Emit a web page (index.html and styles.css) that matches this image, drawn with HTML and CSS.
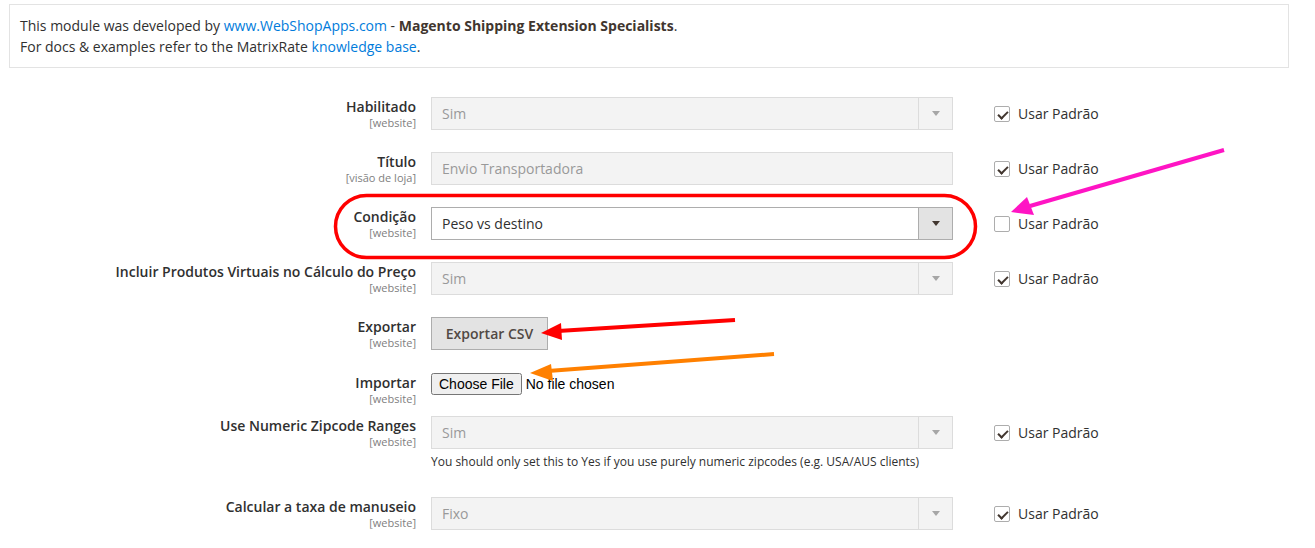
FILE: index.html
```html
<!DOCTYPE html>
<html lang="pt">
<head>
<meta charset="utf-8">
<title>MatrixRate</title>
<link rel="stylesheet" href="styles.css">
</head>
<body>
<div class="page">
  <div class="notice">
    <p>This module was developed by <a href="#">www.WebShopApps.com</a> - <strong>Magento Shipping Extension Specialists</strong>.</p>
    <p>For docs &amp; examples refer to the MatrixRate <a href="#">knowledge base</a>.</p>
  </div>

  <div class="form">
    <div class="row">
      <div class="label"><span class="name">Habilitado</span><span class="scope">[website]</span></div>
      <div class="control"><div class="select disabled"><span class="value">Sim</span><span class="arrow"></span></div></div>
      <label class="default"><span class="check checked"></span>Usar Padrão</label>
    </div>
    <div class="row">
      <div class="label"><span class="name">Título</span><span class="scope">[visão de loja]</span></div>
      <div class="control"><div class="input disabled">Envio Transportadora</div></div>
      <label class="default"><span class="check checked"></span>Usar Padrão</label>
    </div>
    <div class="row">
      <div class="label"><span class="name">Condição</span><span class="scope">[website]</span></div>
      <div class="control"><div class="select"><span class="value">Peso vs destino</span><span class="arrow"></span></div></div>
      <label class="default"><span class="check"></span>Usar Padrão</label>
    </div>
    <div class="row">
      <div class="label"><span class="name">Incluir Produtos Virtuais no Cálculo do Preço</span><span class="scope">[website]</span></div>
      <div class="control"><div class="select disabled"><span class="value">Sim</span><span class="arrow"></span></div></div>
      <label class="default"><span class="check checked"></span>Usar Padrão</label>
    </div>
    <div class="row">
      <div class="label"><span class="name">Exportar</span><span class="scope">[website]</span></div>
      <div class="control"><button class="btn" type="button">Exportar CSV</button></div>
    </div>
    <div class="row row-import">
      <div class="label"><span class="name">Importar</span><span class="scope">[website]</span></div>
      <div class="control"><input class="file" type="file"></div>
    </div>
    <div class="row row-note">
      <div class="label"><span class="name">Use Numeric Zipcode Ranges</span><span class="scope">[website]</span></div>
      <div class="control">
        <div class="select disabled"><span class="value">Sim</span><span class="arrow"></span></div>
        <p class="note">You should only set this to Yes if you use purely numeric zipcodes (e.g. USA/AUS clients)</p>
      </div>
      <label class="default"><span class="check checked"></span>Usar Padrão</label>
    </div>
    <div class="row">
      <div class="label"><span class="name">Calcular a taxa de manuseio</span><span class="scope">[website]</span></div>
      <div class="control"><div class="select disabled"><span class="value">Fixo</span><span class="arrow"></span></div></div>
      <label class="default"><span class="check checked"></span>Usar Padrão</label>
    </div>
  </div>

  <svg class="annot" width="1315" height="548" viewBox="0 0 1315 548" aria-hidden="true">
    <rect x="335.5" y="195.5" width="640" height="62" rx="31" ry="31" fill="none" stroke="#ff0000" stroke-width="3.5"/>
    <line x1="1224" y1="150" x2="1030" y2="206" stroke="#ff14c4" stroke-width="4"/>
    <polygon points="1011,212 1027,197 1034,215" fill="#ff14c4"/>
    <line x1="735" y1="320" x2="558" y2="331" stroke="#ff0000" stroke-width="4"/>
    <polygon points="541,333 561,323 562,340" fill="#ff0000"/>
    <line x1="774" y1="354" x2="548" y2="371" stroke="#ff8000" stroke-width="4"/>
    <polygon points="530,373 551,364 553,381" fill="#ff8000"/>
  </svg>
</div>
</body>
</html>
```
FILE: styles.css
```css
* { box-sizing: border-box; }
html, body { margin: 0; padding: 0; background: #fff; }
body {
  font-family: "Open Sans", "Liberation Sans", sans-serif;
  font-size: 14px;
  color: #303030;
}
.page {
  position: relative;
  width: 1315px;
  height: 548px;
  overflow: hidden;
}
.notice {
  margin: 4px 0 0 9px;
  width: 1280px;
  border: 1px solid #e3e3e3;
  padding: 10px;
  line-height: 21px;
}
.notice p { margin: 0; }
.notice a { color: #007bdb; text-decoration: none; }
.notice strong { font-weight: 700; color: #41362f; }

.form {
  margin-top: 29px;
  display: flex;
  flex-direction: column;
}
.row {
  display: flex;
  align-items: flex-start;
  margin-bottom: 22px;
}
.row-import { margin-bottom: 11px; margin-top: 1px; }
.row-note { margin-bottom: 27px; }
.label {
  width: 416px;
  text-align: right;
  display: flex;
  flex-direction: column;
  align-items: flex-end;
}
.name {
  font-weight: 600;
  font-size: 14px;
  line-height: 19px;
  color: #303030;
}
.scope {
  font-size: 11px;
  line-height: 13px;
  color: #808080;
}
.control {
  margin-left: 15px;
  width: 522px;
}
.select, .input {
  height: 33px;
  border: 1px solid #adadad;
  background: #fff;
  display: flex;
  align-items: center;
  font-size: 14px;
  color: #303030;
}
.select .value, .input { padding-left: 10px; }
.select .value { flex: 1; }
.select .arrow {
  width: 34px;
  height: 100%;
  border-left: 1px solid #adadad;
  background: #e3e3e3;
  position: relative;
}
.select .arrow::after {
  content: "";
  position: absolute;
  left: 13px;
  top: 13px;
  border-left: 4px solid transparent;
  border-right: 4px solid transparent;
  border-top: 5px solid #41362f;
}
.select.disabled, .input.disabled {
  background: #f3f3f3;
  border-color: #dcdcdc;
  color: #999;
}
.select.disabled .arrow {
  background: #f3f3f3;
  border-left-color: #dcdcdc;
}
.select.disabled .arrow::after { border-top-color: #a6a6a6; }

.default {
  margin-left: 41px;
  height: 33px;
  display: flex;
  align-items: center;
  color: #303030;
  font-size: 14px;
}
.check {
  width: 16px;
  height: 16px;
  border: 1px solid #adadad;
  border-radius: 2px;
  background: #fff;
  margin-right: 8px;
  position: relative;
}
.check.checked::after {
  content: "";
  position: absolute;
  left: 5px;
  top: 2px;
  width: 4px;
  height: 8px;
  border-right: 2px solid #41362f;
  border-bottom: 2px solid #41362f;
  transform: rotate(45deg);
}
.btn {
  height: 33px;
  width: 117px;
  border: 1px solid #adadad;
  background: #e3e3e3;
  color: #514943;
  font-family: "Open Sans", "Liberation Sans", sans-serif;
  font-weight: 600;
  font-size: 14px;
  padding: 0;
  margin: 0;
}
.file {
  font-family: "Liberation Sans", Arial, sans-serif;
  font-size: 14px;
  color: #000;
  margin: 0;
}
.note {
  margin: 5px 0 0;
  font-size: 12px;
  line-height: 16px;
  color: #303030;
}
.annot {
  position: absolute;
  left: 0;
  top: 0;
  pointer-events: none;
}
```
